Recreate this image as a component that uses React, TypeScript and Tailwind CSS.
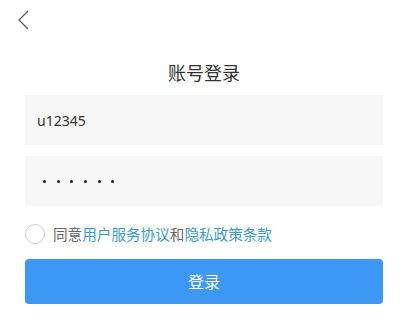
import React from "react";

export default function App() {
  return (
    <div
      className="w-[400px] h-[327px] bg-white overflow-hidden"
      style={{ fontFamily: '"Noto Sans", "Noto Sans CJK SC", sans-serif' }}
    >
      <div className="pt-[10px] pl-[17px] h-[30px]">
        <svg width="12" height="20" viewBox="0 0 12 20" fill="none">
          <polyline points="11,1 2,10 11,19" stroke="#666" strokeWidth="1.4" strokeLinejoin="miter" />
        </svg>
      </div>
      <div className="pl-[25px] pr-[17px]">
        <div className="mt-[30px] text-center text-[18px] leading-[26px] text-[#333]">账号登录</div>
        <div className="mt-[9px] h-[50px] bg-[#f7f7f7] flex items-center pl-[12px] text-[14px] text-[#333]">
          u12345
        </div>
        <div className="mt-[11px] h-[50px] bg-[#f7f7f7] flex items-center pl-[18px] gap-[10.7px]">
          <div className="w-[3px] h-[3px] rounded-full bg-[#222]" />
          <div className="w-[3px] h-[3px] rounded-full bg-[#222]" />
          <div className="w-[3px] h-[3px] rounded-full bg-[#222]" />
          <div className="w-[3px] h-[3px] rounded-full bg-[#222]" />
          <div className="w-[3px] h-[3px] rounded-full bg-[#222]" />
          <div className="w-[3px] h-[3px] rounded-full bg-[#222]" />
        </div>
        <div className="mt-[18px] flex items-center gap-[8px] h-[20px]">
          <div className="w-[20px] h-[20px] rounded-full border border-[#cfcfcf] bg-white shrink-0" />
          <div className="text-[14.6px] leading-[20px] text-[#666] whitespace-nowrap">
            同意<span className="text-[#3a9bc9]">用户服务协议</span>和<span className="text-[#3a9bc9]">隐私政策条款</span>
          </div>
        </div>
        <div className="mt-[15px] h-[45px] bg-[#3d97f5] rounded-[4px] flex items-center justify-center text-white text-[16px]">
          登录
        </div>
      </div>
    </div>
  );
}
